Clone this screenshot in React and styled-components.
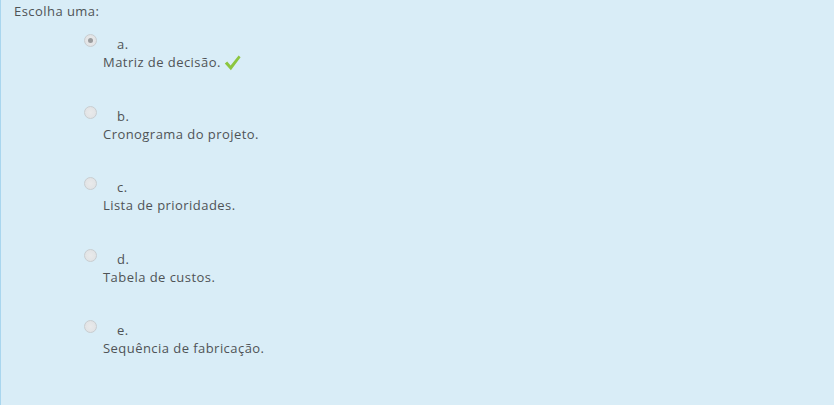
import styled, { createGlobalStyle } from "styled-components";

const GlobalStyle = createGlobalStyle`
  html, body {
    margin: 0;
    padding: 0;
  }
  body {
    font-family: "Open Sans", "Liberation Sans", sans-serif;
    background: #d9edf7;
  }
`;

const options = [
  { letter: "a.", text: "Matriz de decisão.", checked: true, correct: true },
  { letter: "b.", text: "Cronograma do projeto." },
  { letter: "c.", text: "Lista de prioridades." },
  { letter: "d.", text: "Tabela de custos." },
  { letter: "e.", text: "Sequência de fabricação." },
];

function Check() {
  return (
    <CheckIcon viewBox="0 0 17 16" width="17" height="16">
      <path
        d="M0.8 8.4 L3.2 6.6 L6.6 10.4 L14.6 0.6 L16.6 2.2 L6.9 15.2 Z"
        fill="#8cc63f"
      />
    </CheckIcon>
  );
}

export default function App() {
  return (
    <>
      <GlobalStyle />
      <Panel>
        <Prompt>Escolha uma:</Prompt>
        <Answers>
          {options.map((option) => (
            <Option key={option.letter}>
              <LetterRow>
                <Radio checked={option.checked} />
                <Letter>{option.letter}</Letter>
              </LetterRow>
              <AnswerText>
                {option.text}
                {option.correct ? <Check /> : ""}
              </AnswerText>
            </Option>
          ))}
        </Answers>
      </Panel>
    </>
  );
}

const Panel = styled.div`
  height: 405px;
  box-sizing: border-box;
  background: #d9edf7;
  border-left: 1px solid #a9d6ee;
  padding: 0 0 0 13px;
  color: #4f5356;
  font-size: 13px;
  letter-spacing: 0.45px;
`;

const Prompt = styled.div`
  line-height: 20px;
  padding-top: 1px;
`;

const Answers = styled.div`
  padding-left: 70px;
  padding-top: 11px;
`;

const Option = styled.div`
  height: 71.5px;
`;

const LetterRow = styled.div`
  display: flex;
  align-items: center;
  height: 20px;
`;

const Radio = styled.span`
  box-sizing: border-box;
  width: 13px;
  height: 13px;
  border-radius: 50%;
  border: 1px solid #c9cdd0;
  background: radial-gradient(circle, #e9eaeb 0%, #dfe1e3 100%);
  position: relative;
  margin-top: -3px;

  &::after {
    content: "";
    display: ${({ checked }) => (checked ? "block" : "none")};
    position: absolute;
    left: 3px;
    top: 3px;
    width: 5px;
    height: 5px;
    border-radius: 50%;
    background: #9a9c9e;
  }
`;

const Letter = styled.span`
  margin-left: 20px;
  line-height: 20px;
  margin-top: 4px;
`;

const AnswerText = styled.div`
  margin-left: 19px;
  line-height: 20px;
  display: flex;
  align-items: center;
`;

const CheckIcon = styled.svg`
  margin-left: 3px;
  margin-top: 1px;
`;
